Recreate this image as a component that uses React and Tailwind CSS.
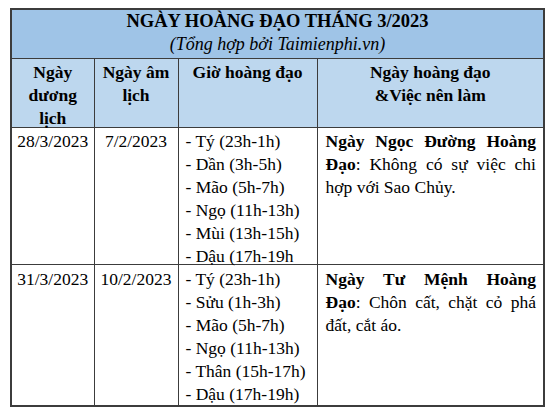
const rows = [
  {
    duong: "28/3/2023",
    am: "7/2/2023",
    gio: ["- Tý (23h-1h)", "- Dần (3h-5h)", "- Mão (5h-7h)", "- Ngọ (11h-13h)", "- Mùi (13h-15h)", "- Dậu (17h-19h"],
    ten: ["Ngày", "Ngọc", "Đường", "Hoàng"],
    line2: ["Không", "có", "sự", "việc", "chi"],
    rest: "hợp với Sao Chủy.",
    h: "h-[136px] pt-[2px]",
  },
  {
    duong: "31/3/2023",
    am: "10/2/2023",
    gio: ["- Tý (23h-1h)", "- Sửu (1h-3h)", "- Mão (5h-7h)", "- Ngọ (11h-13h)", "- Thân (15h-17h)", "- Dậu (17h-19h)"],
    ten: ["Ngày", "Tư", "Mệnh", "Hoàng"],
    line2: ["Chôn", "cất,", "chặt", "cỏ", "phá"],
    rest: "đất, cắt áo.",
    h: "h-[140px] pt-[3px]",
  },
];

function JustLine({ children }) {
  return <div className="flex justify-between">{children}</div>;
}

export default function App() {
  const cell = "p-0 border border-[#3c3c3c] align-top";
  return (
    <div className="w-[550px] h-[418px] bg-white pt-[8px] pl-[10px] text-black font-['Liberation_Serif'] text-[17.5px] leading-[23px]">
      <table className="border-collapse table-fixed w-[533px] border-2 border-[#3c3c3c] font-['Liberation_Serif']">
        <colgroup>
          <col className="w-[83px]" />
          <col className="w-[84px]" />
          <col className="w-[139px]" />
          <col className="w-[227px]" />
        </colgroup>
        <tbody>
          <tr>
            <td colSpan={4} className={`${cell} bg-[#9fc4e7] text-center`}>
              <div className="h-[48px]">
                <div className="font-bold text-[18.5px] leading-[23px]">NGÀY HOÀNG ĐẠO THÁNG 3/2023</div>
                <div className="italic text-[18px] leading-[23px]">(Tổng hợp bởi Taimienphi.vn)</div>
              </div>
            </td>
          </tr>
          <tr className="bg-[#bdd7ee] font-bold">
            <td className={`${cell} text-center`}>
              <div className="h-[68px] pt-[2px]">
                Ngày
                <br />
                dương
                <br />
                lịch
              </div>
            </td>
            <td className={`${cell} text-center`}>
              <div className="pt-[2px]">
                Ngày âm
                <br />
                lịch
              </div>
            </td>
            <td className={`${cell} text-center`}>
              <div className="pt-[2px]">Giờ hoàng đạo</div>
            </td>
            <td className={`${cell} text-center`}>
              <div className="pt-[2px]">
                Ngày hoàng đạo
                <br />
                &amp;Việc nên làm
              </div>
            </td>
          </tr>
          {rows.map((r) => (
            <tr key={r.duong}>
              <td className={`${cell} text-center`}>
                <div className={r.h}>{r.duong}</div>
              </td>
              <td className={`${cell} text-center`}>
                <div className={r.h}>{r.am}</div>
              </td>
              <td className={cell}>
                <div className={`${r.h} pl-[7px]`}>
                  {r.gio.map((g) => (
                    <div key={g} className="whitespace-nowrap">{g}</div>
                  ))}
                </div>
              </td>
              <td className={cell}>
                <div className={`${r.h} pl-[8px] pr-[7px]`}>
                  <JustLine>
                    {r.ten.map((w) => (
                      <span key={w} className="font-bold">{w}</span>
                    ))}
                  </JustLine>
                  <JustLine>
                    <span>
                      <span className="font-bold">Đạo</span>:
                    </span>
                    {r.line2.map((w) => (
                      <span key={w}>{w}</span>
                    ))}
                  </JustLine>
                  <div>{r.rest}</div>
                </div>
              </td>
            </tr>
          ))}
        </tbody>
      </table>
    </div>
  );
}
